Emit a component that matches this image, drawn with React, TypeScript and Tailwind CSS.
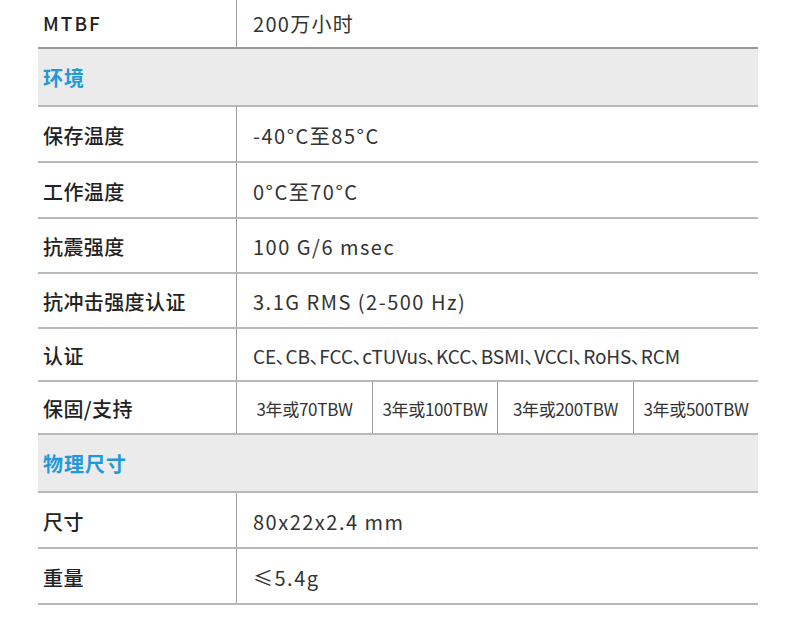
const rows1 = [
  { label: '保存温度', value: '-40°C至85°C', h: 'h-[56px]' },
  { label: '工作温度', value: '0°C至70°C', h: 'h-[56px]' },
  { label: '抗震强度', value: '100 G/6 msec', h: 'h-[55px]' },
  { label: '抗冲击强度认证', value: '3.1G RMS (2-500 Hz)', h: 'h-[55px]' },
  { label: '认证', value: 'CE､CB､FCC､cTUVus､KCC､BSMI､VCCI､RoHS､RCM', h: 'h-[53px]', tight: true },
];

const warranty = [
  { text: '3年或70TBW', w: 'w-[136px]' },
  { text: '3年或100TBW', w: 'w-[125px]' },
  { text: '3年或200TBW', w: 'w-[136px]' },
  { text: '3年或500TBW', w: 'w-[124px]' },
];

function Row({ label, value, h, tight }: { label: string; value: string; h: string; tight?: boolean }) {
  return (
    <div className={`flex border-b-2 border-[#b8b8b8] ${h}`}>
      <div className="w-[199px] shrink-0 border-r border-[#9a9a9a] flex items-center pl-[5px] pt-[3px] text-[20px] tracking-[0.4px] font-medium text-[#222]">
        {label}
      </div>
      <div
        className={`flex items-center pl-[16px] pt-[3px] text-[#333] whitespace-nowrap ${tight ? 'text-[19px] tracking-[-0.1px]' : 'text-[20px] tracking-[1.5px]'}`}
      >
        {value}
      </div>
    </div>
  );
}

function Section({ title }: { title: string }) {
  return (
    <div className="h-[58px] bg-[#ebebeb] border-b-2 border-[#b8b8b8] flex items-center pl-[5px] pt-[2px] text-[20px] tracking-[1px] font-semibold text-[#1e9ad8]">
      {title}
    </div>
  );
}

export default function App() {
  return (
    <div className="w-[800px] h-[630px] bg-white overflow-hidden font-['Noto_Sans_CJK_SC',sans-serif]">
      <div className="ml-[38px] w-[720px]">
        <div className="flex h-[49px] border-b-2 border-[#9a9a9a]">
          <div className="w-[199px] shrink-0 border-r border-[#9a9a9a] flex items-center pl-[5px] text-[19px] font-medium tracking-[2px] text-[#222]">
            MTBF
          </div>
          <div className="flex items-center pl-[16px] text-[20px] tracking-[1.3px] text-[#333]">200万小时</div>
        </div>
        <Section title="环境" />
        {rows1.map((r) => (
          <Row key={r.label} {...r} />
        ))}
        <div className="flex h-[53px] border-b-2 border-[#b8b8b8]">
          <div className="w-[199px] shrink-0 border-r border-[#9a9a9a] flex items-center pl-[5px] pt-[3px] text-[20px] tracking-[0.4px] font-medium text-[#222]">
            保固/支持
          </div>
          {warranty.map((c, i) => (
            <div
              key={c.text}
              className={`${c.w} shrink-0 flex items-center justify-center pt-[3px] text-[17px] tracking-[-0.3px] text-[#333] whitespace-nowrap ${i < 3 ? 'border-r border-[#9a9a9a]' : ''}`}
            >
              {c.text}
            </div>
          ))}
        </div>
        <Section title="物理尺寸" />
        <Row label="尺寸" value="80x22x2.4 mm" h="h-[56px]" />
        <Row label="重量" value="≤5.4g" h="h-[56px]" />
      </div>
    </div>
  );
}
